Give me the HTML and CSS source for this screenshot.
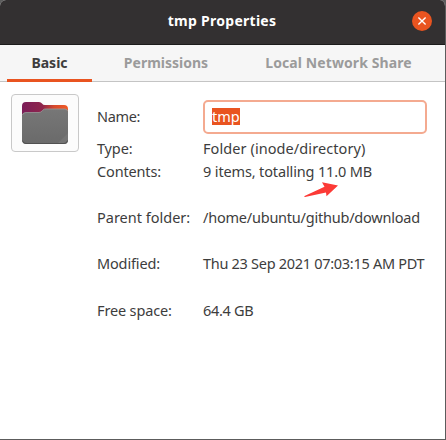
FILE: index.html
```html
<!DOCTYPE html>
<html lang="en">
<head>
<meta charset="utf-8">
<title>tmp Properties</title>
<link rel="stylesheet" href="styles.css">
</head>
<body>
<main class="window">
  <header class="titlebar">
    <h1 class="title">tmp Properties</h1>
    <button class="close" aria-label="Close"><svg width="20" height="20" viewBox="0 0 20 20"><path d="M6.400 6.400l7.200 7.200M13.600 6.400l-7.200 7.200" stroke="#fff" stroke-width="1.400"/></svg></button>
  </header>
  <nav class="tabs">
    <a class="tab basic active"><span>Basic</span></a>
    <a class="tab permissions"><span>Permissions</span></a>
    <a class="tab share"><span>Local Network Share</span></a>
  </nav>
  <section class="content">
    <div class="icon-button">
      <svg width="46" height="43" viewBox="0 0 46 43">
        <defs>
          <linearGradient id="back"><stop offset="0" stop-color="#7b1d58"/><stop offset=".45" stop-color="#8f254b"/><stop offset=".7" stop-color="#d64a2c"/><stop offset="1" stop-color="#f15a25"/></linearGradient>
          <linearGradient id="front" x2="0" y2="1"><stop offset="0" stop-color="#777"/><stop offset="1" stop-color="#6a6a6a"/></linearGradient>
        </defs>
        <path d="M0 4Q0 0 4 0H17Q19 0 20 1.500T23 3H42Q46 3 46 7V25H0Z" fill="url(#back)"/>
        <path d="M0 14Q0 10.500 3.500 10.500H17Q19 10.500 20.500 8.500T24 7H43Q46 7 46 10V38Q46 42 42 42H4Q0 42 0 38Z" fill="url(#front)"/>
        <path d="M.5 13Q1 10.500 4 10.500H17Q19 10.500 20.500 8.500T24 7H43Q45 7 45.500 9" fill="none" stroke="#999" stroke-width=".8"/>
        <path d="M46 31V38Q46 42 42 42H35Z" fill="#757575"/>
        <path d="M.5 38.500Q1 41.500 4 41.500H42Q45 41.500 45.500 38.500" fill="none" stroke="#505050"/>
      </svg>
    </div>
    <dl class="details">
      <dt class="name">Name:</dt><dd class="field"><span class="selection">tmp</span></dd>
      <dt class="type">Type:</dt><dd class="v-type">Folder (inode/directory)</dd>
      <dt class="contents">Contents:</dt><dd class="v-contents">9 items, totalling 11.0 MB</dd>
      <dt class="parent">Parent folder:</dt><dd class="v-parent">/home/ubuntu/github/download</dd>
      <dt class="modified">Modified:</dt><dd class="v-modified">Thu 23 Sep 2021 07:03:15 AM PDT</dd>
      <dt class="free">Free space:</dt><dd class="v-free">64.4 GB</dd>
    </dl>
    <svg class="arrow" width="35" height="16" viewBox="0 0 35 16"><path d="M0 14.200L20.500 4.800L18 .3L34 3.500L22.500 14.300L22 10.500L1 15Z" fill="#fc3a36"/></svg>
  </section>
</main>
</body>
</html>
```
FILE: styles.css
```css
* { box-sizing: border-box; }
body { margin: 0; background: #5c5c5c; font: 14.5px/23px "Noto Sans", sans-serif; color: #3d3d3d; }
.window { width: 446px; height: 440px; border: solid #5c5c5c; border-width: 0 1px 1px 0; background: #fff; border-radius: 6px 6px 0 0; overflow: hidden; }
.titlebar { height: 45px; display: grid; grid-template-columns: 1fr auto 1fr; align-items: center; padding: 0 13px 3px 12px; background: #333031; border-bottom: 1px solid #1c1b1b; }
.title { grid-column: 2; margin: 0; font-size: 14px; line-height: 22px; letter-spacing: .27px; color: #fff; white-space: nowrap; }
.close { justify-self: end; width: 20px; height: 20px; padding: 0; border: 0; border-radius: 50%; background: #e95420; }
.close svg { display: block; }
.tabs { height: 37px; display: flex; padding: 0 6px 0 7px; background: #f6f6f6; border-bottom: 1px solid #c4c4c4; }
.tab { height: 37px; display: flex; justify-content: center; padding-top: 6px; font-size: 14px; font-weight: 700; color: #9b9b9b; white-space: nowrap; }
.basic { width: 85px; }
.permissions { width: 148px; }
.share { width: 197px; letter-spacing: .1px; }
.active { color: #3d3d3d; border-bottom: 3px solid #e95420; }
.content { position: relative; display: grid; grid-template-columns: 68px 331px; gap: 18px; padding: 12px 17px 0 11px; }
.icon-button { width: 68px; height: 58px; display: grid; place-items: center; border: 1px solid #c9c9c9; border-radius: 4px; background: #fcfcfc; }
.details { display: grid; grid-template-columns: 106px 224px; grid-template-rows: 37px 23px 23px 46px 46px 47px; margin: 6px 0 0; align-items: end; white-space: nowrap; }
.details dt, .details dd { margin: 0; height: 23px; }
.details dt { letter-spacing: -.15px; }
.details .parent { letter-spacing: 0; }
.details .name { align-self: start; margin-top: 5px; letter-spacing: -.35px; }
.details .field { align-self: start; height: 34px; padding: 6px 7px; border: 2px solid #f4aa90; border-radius: 5px; }
.v-type { letter-spacing: .08px; }
.v-contents { letter-spacing: -.14px; }
.v-parent { letter-spacing: -.22px; }
.v-modified { letter-spacing: -.29px; }
.v-free { letter-spacing: -.3px; }
.selection { display: inline-block; height: 17px; line-height: 17px; color: #fff; background: #e95420; vertical-align: top; }
.arrow { position: absolute; left: 304px; top: 100px; }
```
